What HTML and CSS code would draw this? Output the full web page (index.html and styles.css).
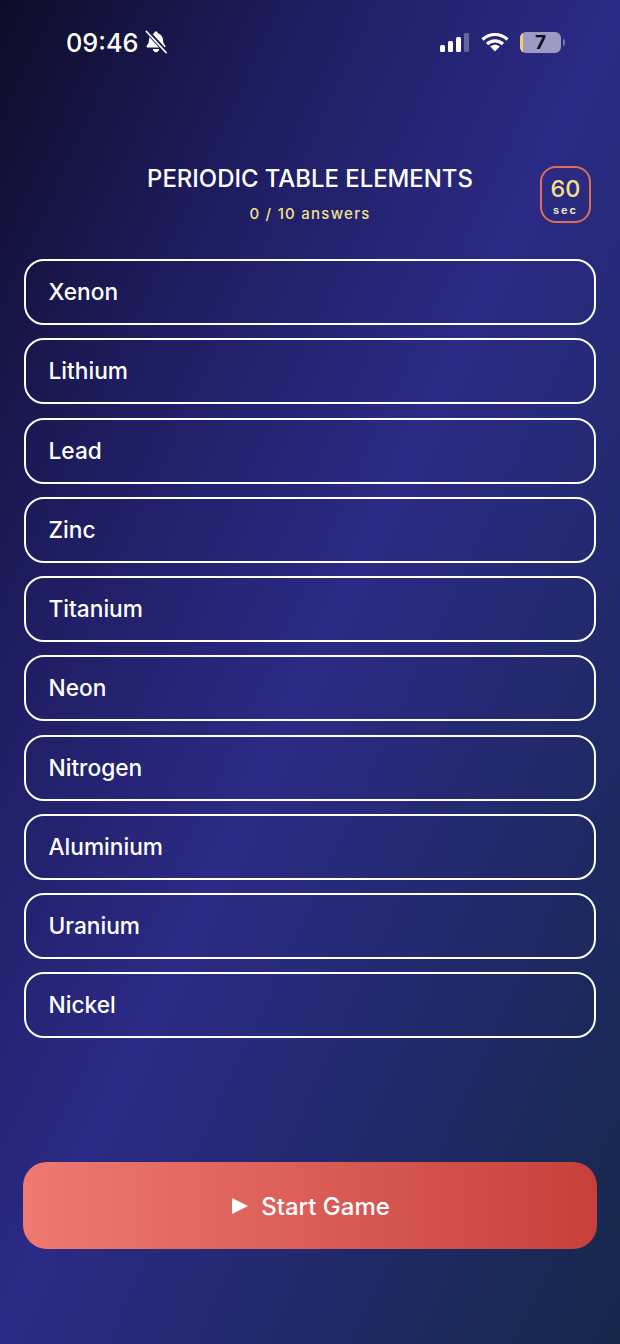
FILE: index.html
```html
<!DOCTYPE html>
<html lang="en">
<head>
    <meta charset="UTF-8">
    <meta name="viewport" content="width=device-width, initial-scale=1.0">
    <title>Periodic Table Elements</title>
    <link rel="stylesheet" href="styles.css">
</head>
<body>
    <div class="screen">
        <div class="status-bar">
            <div class="status-left">
                <span class="clock">09:46</span>
                <svg class="bell" width="22" height="24" viewBox="0 0 22 24">
                    <path fill="#fff" d="M11 1.500c1 0 1.700.7 1.800 1.700 3.200.8 5 3.400 5.200 6.600.1 2.400.6 4.100 2.300 6 .5.700.2 1.700-.8 1.700H2.500c-1 0-1.300-1-.8-1.700 1.700-1.900 2.200-3.600 2.300-6 .2-3.200 2-5.800 5.200-6.600.1-1 .8-1.700 1.800-1.700z"/>
                    <path fill="#fff" d="M7.800 19h6.400c-.2 1.900-1.500 3.200-3.200 3.200s-3-1.300-3.200-3.200z"/>
                    <path stroke="#1a1950" stroke-width="4.400" d="M1 0l20.500 22.500"/>
                    <path stroke="#fff" stroke-width="1.800" stroke-linecap="round" d="M1.500 1.500l19.500 21"/>
                </svg>
            </div>
            <div class="status-right">
                <div class="signal">
                    <span class="bar bar-1"></span>
                    <span class="bar bar-2"></span>
                    <span class="bar bar-3"></span>
                    <span class="bar bar-4"></span>
                </div>
                <svg class="wifi" width="28" height="20" viewBox="0 0 28 20" fill="none" stroke="#fff" stroke-width="3.200">
                    <path d="M1.500 7.500C9 .8 19 .8 26.500 7.500"/>
                    <path d="M6 12c4.700-4.200 11.300-4.200 16 0"/>
                    <path fill="#fff" stroke="none" d="M14 19.500l-4.800-5c2.800-2.300 6.800-2.300 9.600 0z"/>
                </svg>
                <div class="battery">
                    <div class="battery-body">
                        <span class="battery-level"></span>
                        <span class="battery-num">7</span>
                    </div>
                    <span class="battery-cap"></span>
                </div>
            </div>
        </div>

        <div class="header">
            <div class="title-block">
                <h1>PERIODIC TABLE ELEMENTS</h1>
                <p class="progress">0 / 10 answers</p>
            </div>
            <div class="timer">
                <span class="timer-num">60</span>
                <span class="timer-unit">sec</span>
            </div>
        </div>

        <div class="answers">
            <div class="answer">Xenon</div>
            <div class="answer">Lithium</div>
            <div class="answer">Lead</div>
            <div class="answer">Zinc</div>
            <div class="answer">Titanium</div>
            <div class="answer">Neon</div>
            <div class="answer">Nitrogen</div>
            <div class="answer">Aluminium</div>
            <div class="answer">Uranium</div>
            <div class="answer">Nickel</div>
        </div>

        <button class="start">
            <svg width="16" height="16" viewBox="0 0 16 16"><path fill="#fff" d="M0 0L16 8 0 16z"/></svg>
            <span>Start Game</span>
        </button>
    </div>
</body>
</html>
```

FILE: styles.css
```css
* {
    box-sizing: border-box;
}
body {
    margin: 0;
    font-family: 'Inter', sans-serif;
    color: white;
}
.screen {
    width: 620px;
    height: 1344px;
    overflow: hidden;
    display: flex;
    flex-direction: column;
    background: linear-gradient(to bottom right, #0f0c29 0%, #1e1d60 25%, #2b2a85 50%, #15284a 100%);
}

/* status bar */
.status-bar {
    height: 84px;
    flex-shrink: 0;
    display: flex;
    justify-content: space-between;
    align-items: center;
    padding: 0 55px 0 66px;
}
.status-left {
    display: flex;
    align-items: center;
    gap: 6.500px;
}
.clock {
    font-size: 25.300px;
    font-weight: 550;
}
.status-right {
    display: flex;
    align-items: center;
    gap: 11px;
}
.signal {
    display: flex;
    align-items: flex-end;
    gap: 2.500px;
    height: 20px;
    margin-right: 1px;
}
.bar {
    width: 5.500px;
    border-radius: 1.500px;
    background: #fff;
}
.bar-1 { height: 7px; }
.bar-2 { height: 11px; }
.bar-3 { height: 15px; }
.bar-4 { height: 19px; background: rgba(255,255,255,0.3); }
.battery {
    display: flex;
    align-items: center;
    gap: 2px;
}
.battery-body {
    position: relative;
    width: 41px;
    height: 21px;
    border-radius: 6px;
    overflow: hidden;
    background: #9d9ac3;
    display: flex;
    align-items: center;
    justify-content: center;
}
.battery-level {
    position: absolute;
    left: 0;
    top: 0;
    bottom: 0;
    width: 3px;
    background: #f2ce6b;
}
.battery-num {
    font-size: 19px;
    font-weight: 700;
    color: #0c0c20;
}
.battery-cap {
    width: 2px;
    height: 7px;
    border-radius: 0 2px 2px 0;
    background: #77769f;
}

/* header */
.header {
    position: relative;
    height: 175px;
    flex-shrink: 0;
    padding-top: 79.500px;
    text-align: center;
}
.title-block h1 {
    margin: 0;
    font-size: 23.900px;
    line-height: 30px;
    font-weight: 520;
}
.progress {
    margin: 10.500px 0 0;
    font-size: 15px;
    line-height: 19px;
    font-weight: 550;
    letter-spacing: 1.250px;
    color: #f5e08a;
}
.timer {
    position: absolute;
    left: 540px;
    top: 82px;
    width: 51px;
    height: 57px;
    border: 2.500px solid #dc6f55;
    border-radius: 16px;
    display: flex;
    flex-direction: column;
    align-items: center;
    padding-top: 6.500px;
}
.timer-num {
    font-size: 23.400px;
    line-height: 28px;
    font-weight: 500;
    color: #f5e08a;
}
.timer-unit {
    font-size: 11px;
    line-height: 14px;
    font-weight: 600;
    letter-spacing: 2px;
    color: #f5eec0;
}

/* answers */
.answers {
    display: flex;
    flex-direction: column;
    gap: 13.250px;
    padding: 0 24px;
}
.answer {
    height: 66px;
    display: flex;
    align-items: center;
    padding: 0 0 1px 22.500px;
    border: 2px solid #fff;
    border-radius: 20px;
    font-size: 22.700px;
    font-weight: 540;
}

/* start button */
.start {
    display: flex;
    align-items: center;
    justify-content: center;
    gap: 13px;
    height: 87px;
    margin: 124px 23px 0;
    padding: 1px 0 0 2px;
    border: none;
    border-radius: 24px;
    background: linear-gradient(90deg, #ee7a72 0%, #c7403c 100%);
    color: white;
    font-family: 'Inter', sans-serif;
    font-size: 24px;
    font-weight: 520;
}
```
